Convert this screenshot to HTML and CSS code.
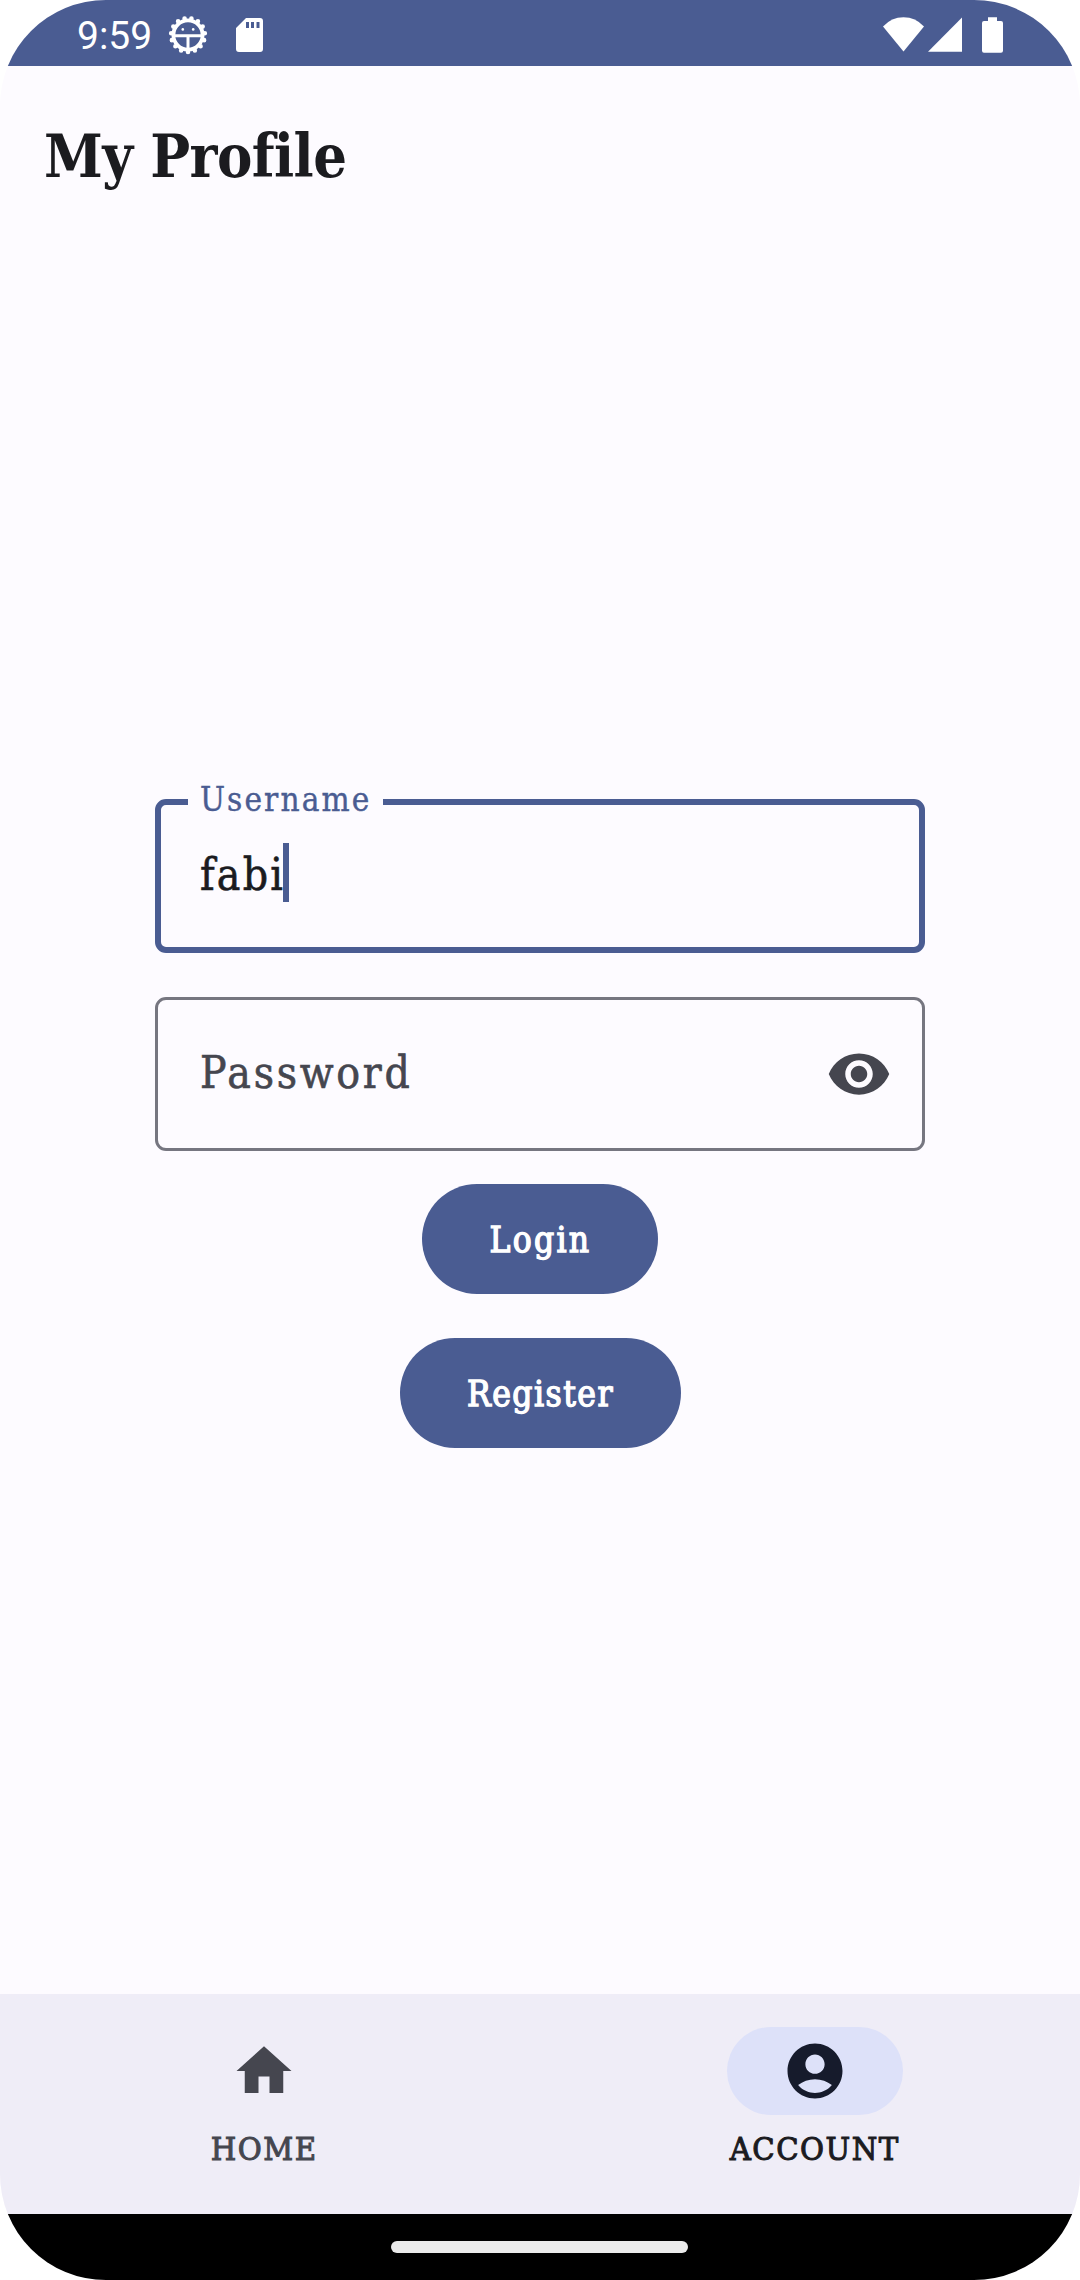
FILE: index.html
```html
<!DOCTYPE html>
<html lang="en">
<head>
<meta charset="utf-8">
<title>My Profile</title>
<link rel="stylesheet" href="styles.css">
</head>
<body>
<div class="screen">
  <header class="status-bar">
    <div class="status-group">
      <span class="clock">9:59</span>
      <svg class="debug-icon" width="40" height="40" viewBox="-20 -20 40 40" fill="none" stroke="#fff">
        <circle r="14.6" stroke-width="3.8"/>
        <circle r="16.9" stroke-width="4.6" stroke-linecap="round" pathLength="15" stroke-dasharray="0 1" transform="rotate(90)"/>
        <path d="M-14 .7H14M0 .7V14" stroke-width="3"/>
        <circle cx="-5.2" cy="-5.6" r="1.3" fill="#fff" stroke="none"/>
        <circle cx="5.2" cy="-5.6" r="1.3" fill="#fff" stroke="none"/>
      </svg>
      <svg class="sd-icon" width="27" height="34" viewBox="0 0 27 34">
        <path fill="#fff" fill-rule="evenodd" d="M10 0H24Q27 0 27 3V31Q27 34 24 34H3Q0 34 0 31V10ZM10 4V10H13V4ZM15 4V10H18V4ZM20.500 4V10H23.500V4Z"/>
      </svg>
    </div>
    <div class="status-group">
      <svg width="41" height="35" viewBox="0 0 41 35"><path fill="#fff" d="M0 9.500Q8.500 .3 20.500 .3T41 9.500L20.500 34.500Z"/></svg>
      <svg class="signal-icon" width="34" height="35" viewBox="0 0 34 35"><path fill="#fff" d="M34 .5V34.700H0Z"/></svg>
      <svg class="battery-icon" width="21" height="36" viewBox="0 0 21 36"><path fill="#fff" d="M6 .3H15V4H19Q21 4 21 6V33.700Q21 35.700 19 35.700H2Q0 35.700 0 33.700V6Q0 4 2 4H6Z"/></svg>
    </div>
  </header>

  <main class="content">
    <h1 class="title">My Profile</h1>
    <form class="login-form">
      <div class="field field-focused">
        <span class="field-label">Username</span>
        <span class="field-value">fabi</span><span class="caret"></span>
      </div>
      <div class="field">
        <span class="placeholder">Password</span>
        <svg class="icon" viewBox="0 0 24 24"><path d="M12 4.500C7 4.500 2.730 7.610 1 12c1.730 4.390 6 7.500 11 7.500s9.270-3.110 11-7.500c-1.730-4.390-6-7.500-11-7.500zM12 17c-2.760 0-5-2.240-5-5s2.240-5 5-5 5 2.240 5 5-2.240 5-5 5zm0-8c-1.660 0-3 1.340-3 3s1.340 3 3 3 3-1.340 3-3-1.340-3-3-3z"/></svg>
      </div>
      <button type="button" class="button button-login">Login</button>
      <button type="button" class="button button-register">Register</button>
    </form>
  </main>

  <nav class="nav">
    <div class="nav-item">
      <span class="indicator"><svg class="icon" viewBox="0 0 24 24"><path d="M10 20v-6h4v6h5v-8h3L12 3 2 12h3v8z"/></svg></span>
      <span class="nav-label">HOME</span>
    </div>
    <div class="nav-item nav-active">
      <span class="indicator"><svg class="icon" viewBox="0 0 24 24"><path d="M12 2C6.480 2 2 6.480 2 12s4.480 10 10 10 10-4.480 10-10S17.520 2 12 2zm0 4c1.930 0 3.500 1.570 3.500 3.500S13.930 13 12 13s-3.500-1.570-3.500-3.500S10.070 6 12 6zm0 14c-2.030 0-4.430-.82-6.140-2.880C7.550 15.800 9.680 15 12 15s4.450.8 6.140 2.120C16.430 19.180 14.030 20 12 20z"/></svg></span>
      <span class="nav-label">ACCOUNT</span>
    </div>
  </nav>
  <footer class="gesture-bar"><span class="handle"></span></footer>
</div>
</body>
</html>
```
FILE: styles.css
```css
* { box-sizing: border-box; }
body { margin: 0; background: #fff; }

.screen {
  display: flex;
  flex-direction: column;
  width: 1080px;
  height: 2280px;
  overflow: hidden;
  border-radius: 106px;
  background: #fdfbff;
  color: #1b1b1f;
  font-family: "Roboto Slab", "DejaVu Serif Condensed", "DejaVu Serif", serif;
}
svg { display: block; flex: none; }

.status-bar {
  display: flex;
  justify-content: space-between;
  height: 66px;
  padding: 3px 77px 0 77px;
  background: #4a5c92;
}
.status-group { display: flex; align-items: center; }
.clock {
  width: 91px;
  padding-top: 3px;
  color: #fff;
  font: 39px/62px Roboto, sans-serif;
}
.sd-icon { margin-left: 28px; }
.signal-icon { margin-left: 4px; }
.battery-icon { margin-left: 20px; }

.content { flex: 1; }
.title {
  margin: 0;
  padding: 51px 44px 0;
  font-size: 59px;
  font-weight: 700;
  line-height: 80px;
  letter-spacing: -0.6px;
}

.login-form {
  display: flex;
  flex-direction: column;
  align-items: center;
  padding-top: 602px;
}
.field {
  position: relative;
  display: flex;
  align-items: center;
  justify-content: space-between;
  width: 770px;
  height: 154px;
  margin-bottom: 44px;
  padding: 0 30px 0 42px;
  border: 3px solid #767680;
  border-radius: 11px;
  color: #45464f;
  font-size: 44px;
  letter-spacing: 2.7px;
  -webkit-text-stroke: 0.6px currentColor;
}
.placeholder { padding-bottom: 3px; }
.field-focused {
  align-items: flex-start;
  justify-content: flex-start;
  padding: 38px 39px 0;
  border: 6px solid #4a5c92;
  color: #1b1b1f;
}
.field-label {
  position: absolute;
  top: -24px;
  left: 27px;
  width: 195px;
  padding-left: 12px;
  background: #fdfbff;
  color: #4a5c92;
  font-size: 33px;
  line-height: 38px;
  letter-spacing: 2.1px;
  -webkit-text-stroke-width: 0.4px;
}
.field-value {
  width: 83px;
  padding-top: 2px;
  line-height: 59px;
  letter-spacing: 2.2px;
}
.caret { width: 6px; height: 59px; background: #4a5c92; }
.icon { width: 66px; height: 66px; fill: #45464f; }

.button {
  height: 110px;
  margin: 0 0 44px;
  padding: 2px 0 0 1px;
  border: 0;
  border-radius: 55px;
  background: #4a5c92;
  color: #fff;
  font-family: inherit;
  font-size: 35px;
  -webkit-text-stroke: 1.3px #fff;
}
.button-login { width: 236px; margin-top: -11px; letter-spacing: 2.3px; }
.button-register { width: 281px; letter-spacing: 1.5px; }

.nav {
  display: flex;
  gap: 22px;
  height: 220px;
  padding: 33px 1px 0 0;
  background: #efedf7;
}
.nav-item {
  flex: 1;
  display: flex;
  flex-direction: column;
  align-items: center;
  gap: 12px;
  color: #45464f;
}
.indicator {
  display: flex;
  align-items: center;
  justify-content: center;
  width: 176px;
  height: 88px;
  border-radius: 44px;
}
.nav-label {
  font-size: 32.5px;
  line-height: 44px;
  letter-spacing: 1.5px;
  -webkit-text-stroke: 1px currentColor;
}
.nav-active { color: #1b1b1f; }
.nav-active .indicator { background: #dde1f9; }
.nav-active .icon { fill: #161b2c; }

.gesture-bar {
  display: flex;
  justify-content: center;
  height: 66px;
  padding: 27px 1px 0 0;
  background: #000;
}
.handle { width: 297px; height: 12px; border-radius: 6px; background: #ebebeb; }
```
